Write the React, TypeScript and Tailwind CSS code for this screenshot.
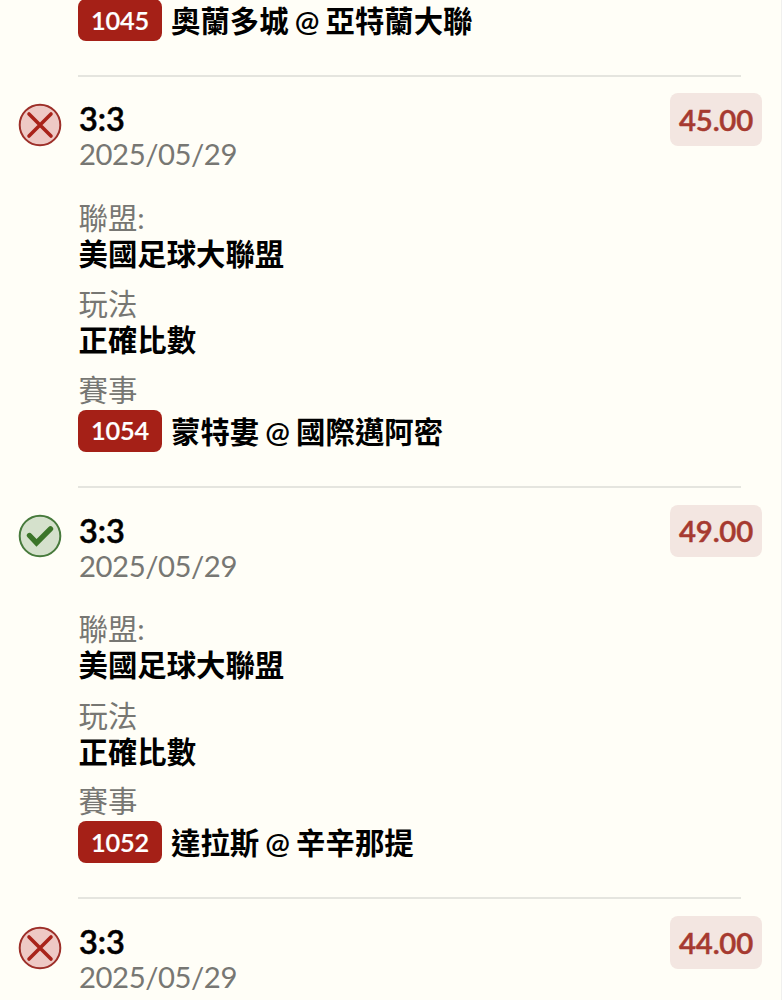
type Bet = {
  id: number;
  won: boolean;
  score: string;
  date: string;
  odds: string;
  code: string;
  match: string;
};

const bets: Bet[] = [
  { id: 1, won: false, score: "3:3", date: "2025/05/29", odds: "45.00", code: "1054", match: "蒙特婁 @ 國際邁阿密" },
  { id: 2, won: true, score: "3:3", date: "2025/05/29", odds: "49.00", code: "1052", match: "達拉斯 @ 辛辛那提" },
];

const StatusIcon = ({ won }: { won: boolean }) => (
  <svg viewBox="0 0 44 44" className="size-11 shrink-0" fill="none" strokeLinecap="round" strokeLinejoin="round">
    {won ? (
      <>
        <circle cx="22" cy="22" r="20.3" fill="#d5e1cc" stroke="#477a3c" strokeWidth="2" />
        <path d="M11.5 21.5 18.5 28.8 32.5 14.8" stroke="#3b7529" strokeWidth="5.4" strokeLinejoin="miter" />
      </>
    ) : (
      <>
        <circle cx="22" cy="22" r="20.3" fill="#eec9c5" stroke="#9d2f29" strokeWidth="2" />
        <path d="M11 11 33 33 M33 11 11 33" stroke="#a9231a" strokeWidth="3.6" />
      </>
    )}
  </svg>
);

const BetHeader = ({ won, score, date, odds }: Pick<Bet, "won" | "score" | "date" | "odds">) => (
  <div className="flex items-start pt-4 pr-[19px] pl-[18px]">
    <div className="mt-[9.5px] mr-4">
      <StatusIcon won={won} />
    </div>
    <div className="flex-1 pt-2 pl-px">
      <div className="text-[32.5px] leading-[35px] font-semibold text-black [-webkit-text-stroke:0.5px]">{score}</div>
      <div className="text-[29.3px] leading-[35px] tracking-[-0.45px] text-[#777773]">{date}</div>
    </div>
    <div className="flex h-[52.5px] w-[92px] items-center justify-center rounded-lg bg-[#f3e6e1] pt-px text-[29.3px] font-semibold tracking-[-0.2px] text-[#a63a30] [-webkit-text-stroke:0.5px]">
      {odds}
    </div>
  </div>
);

const Field = ({ label, value }: { label: string; value: string }) => (
  <div className="mb-[14.5px] pl-[0.5px] leading-9">
    <div className="text-[#777773]">{label}</div>
    <div className="font-semibold text-black">{value}</div>
  </div>
);

const MatchRow = ({ code, match }: Pick<Bet, "code" | "match">) => (
  <div className="flex h-[42px] items-center gap-[9px]">
    <span className="flex h-full w-[84px] items-center justify-center rounded-lg bg-[#a52017] pt-px text-[25.3px] font-semibold tracking-[-0.2px] text-white [-webkit-text-stroke:0.2px]">
      {code}
    </span>
    <span className="pt-[3px] font-semibold [word-spacing:-1.2px] whitespace-nowrap text-black">{match}</span>
  </div>
);

const Divider = () => <div className="mr-10 ml-[78px] h-0.5 bg-[#e5e5df]" />;

const App = () => {
  return (
    <div className="h-[1000px] w-[782px] overflow-hidden border-r border-[#f0f0ee] bg-[#fffef7] font-['Lato','Noto_Sans_CJK_TC',sans-serif] text-[29.4px]">
      <div className="-mt-px pb-[34px] pl-[78px]">
        <MatchRow code="1045" match="奧蘭多城 @ 亞特蘭大聯" />
      </div>
      <Divider />
      {bets.map((bet) => (
        <div key={bet.id} className="h-[411.5px]">
          <BetHeader won={bet.won} score={bet.score} date={bet.date} odds={bet.odds} />
          <div className="h-[314.5px] pt-[28.5px] pl-[78px]">
            <Field label="聯盟:" value="美國足球大聯盟" />
            <Field label="玩法" value="正確比數" />
            <div className="-mt-px mb-[2px] pl-[0.5px] leading-9 text-[#777773]">賽事</div>
            <MatchRow code={bet.code} match={bet.match} />
          </div>
          <Divider />
        </div>
      ))}
      <BetHeader won={false} score="3:3" date="2025/05/29" odds="44.00" />
    </div>
  );
};

export default App;
